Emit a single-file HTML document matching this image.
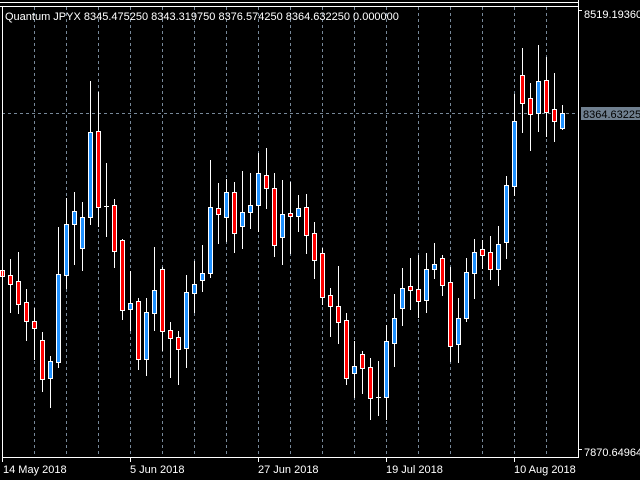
<!DOCTYPE html>
<html><head><style>
html,body{margin:0;padding:0;background:#000;width:640px;height:480px;overflow:hidden}
svg{display:block}
text{font-family:"Liberation Sans",sans-serif;font-size:11px;fill:#fff}
</style></head><body>
<svg id="s" width="640" height="480" xmlns="http://www.w3.org/2000/svg" shape-rendering="crispEdges">
<rect width="640" height="480" fill="#000"/>
<g id="grid" stroke="#778899" stroke-dasharray="3,3"></g>
<line x1="2" y1="113.5" x2="578" y2="113.5" stroke="#778899" stroke-dasharray="3,3"/>
<g id="c"></g>
<line x1="0" y1="2.5" x2="578" y2="2.5" stroke="#fff"/>
<line x1="0" y1="6.5" x2="578" y2="6.5" stroke="#fff"/>
<line x1="2.5" y1="6" x2="2.5" y2="462" stroke="#fff"/>
<line x1="2" y1="457.5" x2="579" y2="457.5" stroke="#fff"/>
<line x1="578.5" y1="0" x2="578.5" y2="458" stroke="#fff"/>
<line x1="578" y1="10.5" x2="582" y2="10.5" stroke="#fff"/>
<line x1="578" y1="449.5" x2="582" y2="449.5" stroke="#fff"/>
<g stroke="#fff"><line x1="130.5" y1="457" x2="130.5" y2="462"/><line x1="258.5" y1="457" x2="258.5" y2="462"/><line x1="386.5" y1="457" x2="386.5" y2="462"/><line x1="514.5" y1="457" x2="514.5" y2="462"/></g>
<text x="5" y="20">Quantum JPYX 8345.475250 8343.319750 8376.574250 8364.632250 0.000000</text>
<text x="584" y="18">8519.19360</text>
<text x="584" y="456">7870.64964</text>
<rect x="581" y="107" width="59" height="13" fill="#708090"/>
<text x="583" y="118" style="fill:#000">8364.63225</text>
<text x="3" y="473">14 May 2018</text>
<text x="130" y="473">5 Jun 2018</text>
<text x="258" y="473">27 Jun 2018</text>
<text x="386" y="473">19 Jul 2018</text>
<text x="514" y="473">10 Aug 2018</text>
</svg>
<script>
var ns="http://www.w3.org/2000/svg";
function el(p,t,a){var e=document.createElementNS(ns,t);for(var k in a)e.setAttribute(k,a[k]);p.appendChild(e);return e;}
var g=document.getElementById('grid');
for(var x=34;x<=546;x+=32)el(g,'line',{x1:x+.5,y1:7,x2:x+.5,y2:457});
var d=[[268,278,270,276,'r'],[259,312,275,284,'r'],[252,313,281,304,'r'],[289,340,302,321,'r'],[308,359,321,328,'r'],[332,391,340,379,'r'],[356,407,361,378,'b'],[227,367,274,362,'b'],[198,288,224,275,'b'],[192,264,211,224,'b'],[202,270,217,248,'b'],[81,224,132,217,'b'],[92,226,131,207,'r'],[163,236,206,206,'w'],[199,267,205,251,'r'],[239,319,240,310,'r'],[271,330,303,309,'b'],[298,369,301,359,'r'],[298,375,312,359,'b'],[247,330,290,313,'b'],[267,350,269,331,'r'],[322,377,330,338,'r'],[331,384,337,349,'r'],[275,367,292,348,'b'],[261,312,284,293,'b'],
[245,291,273,280,'b'],[160,277,207,273,'b'],[183,243,208,214,'r'],[179,241,192,217,'b'],[182,252,192,233,'r'],[171,248,212,226,'b'],[173,228,205,212,'b'],[153,231,173,205,'b'],[148,208,175,188,'r'],[173,256,188,245,'r'],[180,264,214,237,'b'],[182,253,213,216,'r'],[195,231,208,216,'b'],[194,253,207,235,'r'],[222,278,233,260,'r'],[248,304,253,297,'r'],[288,336,295,306,'r'],[266,343,306,322,'r'],[313,384,320,378,'r'],[341,397,366,373,'b'],[351,393,354,368,'r'],[358,419,367,398,'r'],[361,415,397,397,'w'],[325,419,341,397,'b'],[294,366,318,343,'b'],
[268,325,288,308,'b'],[258,309,286,290,'r'],[255,317,289,301,'r'],[253,312,269,300,'b'],[243,278,264,269,'b'],[255,295,258,285,'r'],[267,361,282,346,'r'],[298,362,318,344,'b'],[258,321,272,318,'b'],[239,298,252,273,'b'],[240,268,249,255,'r'],[236,279,252,269,'r'],[226,285,244,269,'b'],[176,258,185,242,'b'],[94,195,121,186,'b'],[48,132,75,103,'r'],[83,150,98,114,'r'],[45,131,81,113,'b'],[57,136,80,112,'r'],[73,141,109,121,'r'],[105,129,113,128,'b']];
var c=document.getElementById('c');
d.forEach(function(v,k){var cx=2+8*k;
el(c,'line',{x1:cx+.5,y1:v[0],x2:cx+.5,y2:v[1]+1,stroke:'#fff'});
if(v[4]=='w'){el(c,'line',{x1:cx-2,y1:v[2]+.5,x2:cx+3,y2:v[2]+.5,stroke:'#fff'});}
else{el(c,'rect',{x:cx-1.5,y:v[2]+.5,width:4,height:Math.max(1,v[3]-v[2]),fill:v[4]=='r'?'#ff0000':'#1e90ff',stroke:'#fff'});}
});
</script>
</body></html>
